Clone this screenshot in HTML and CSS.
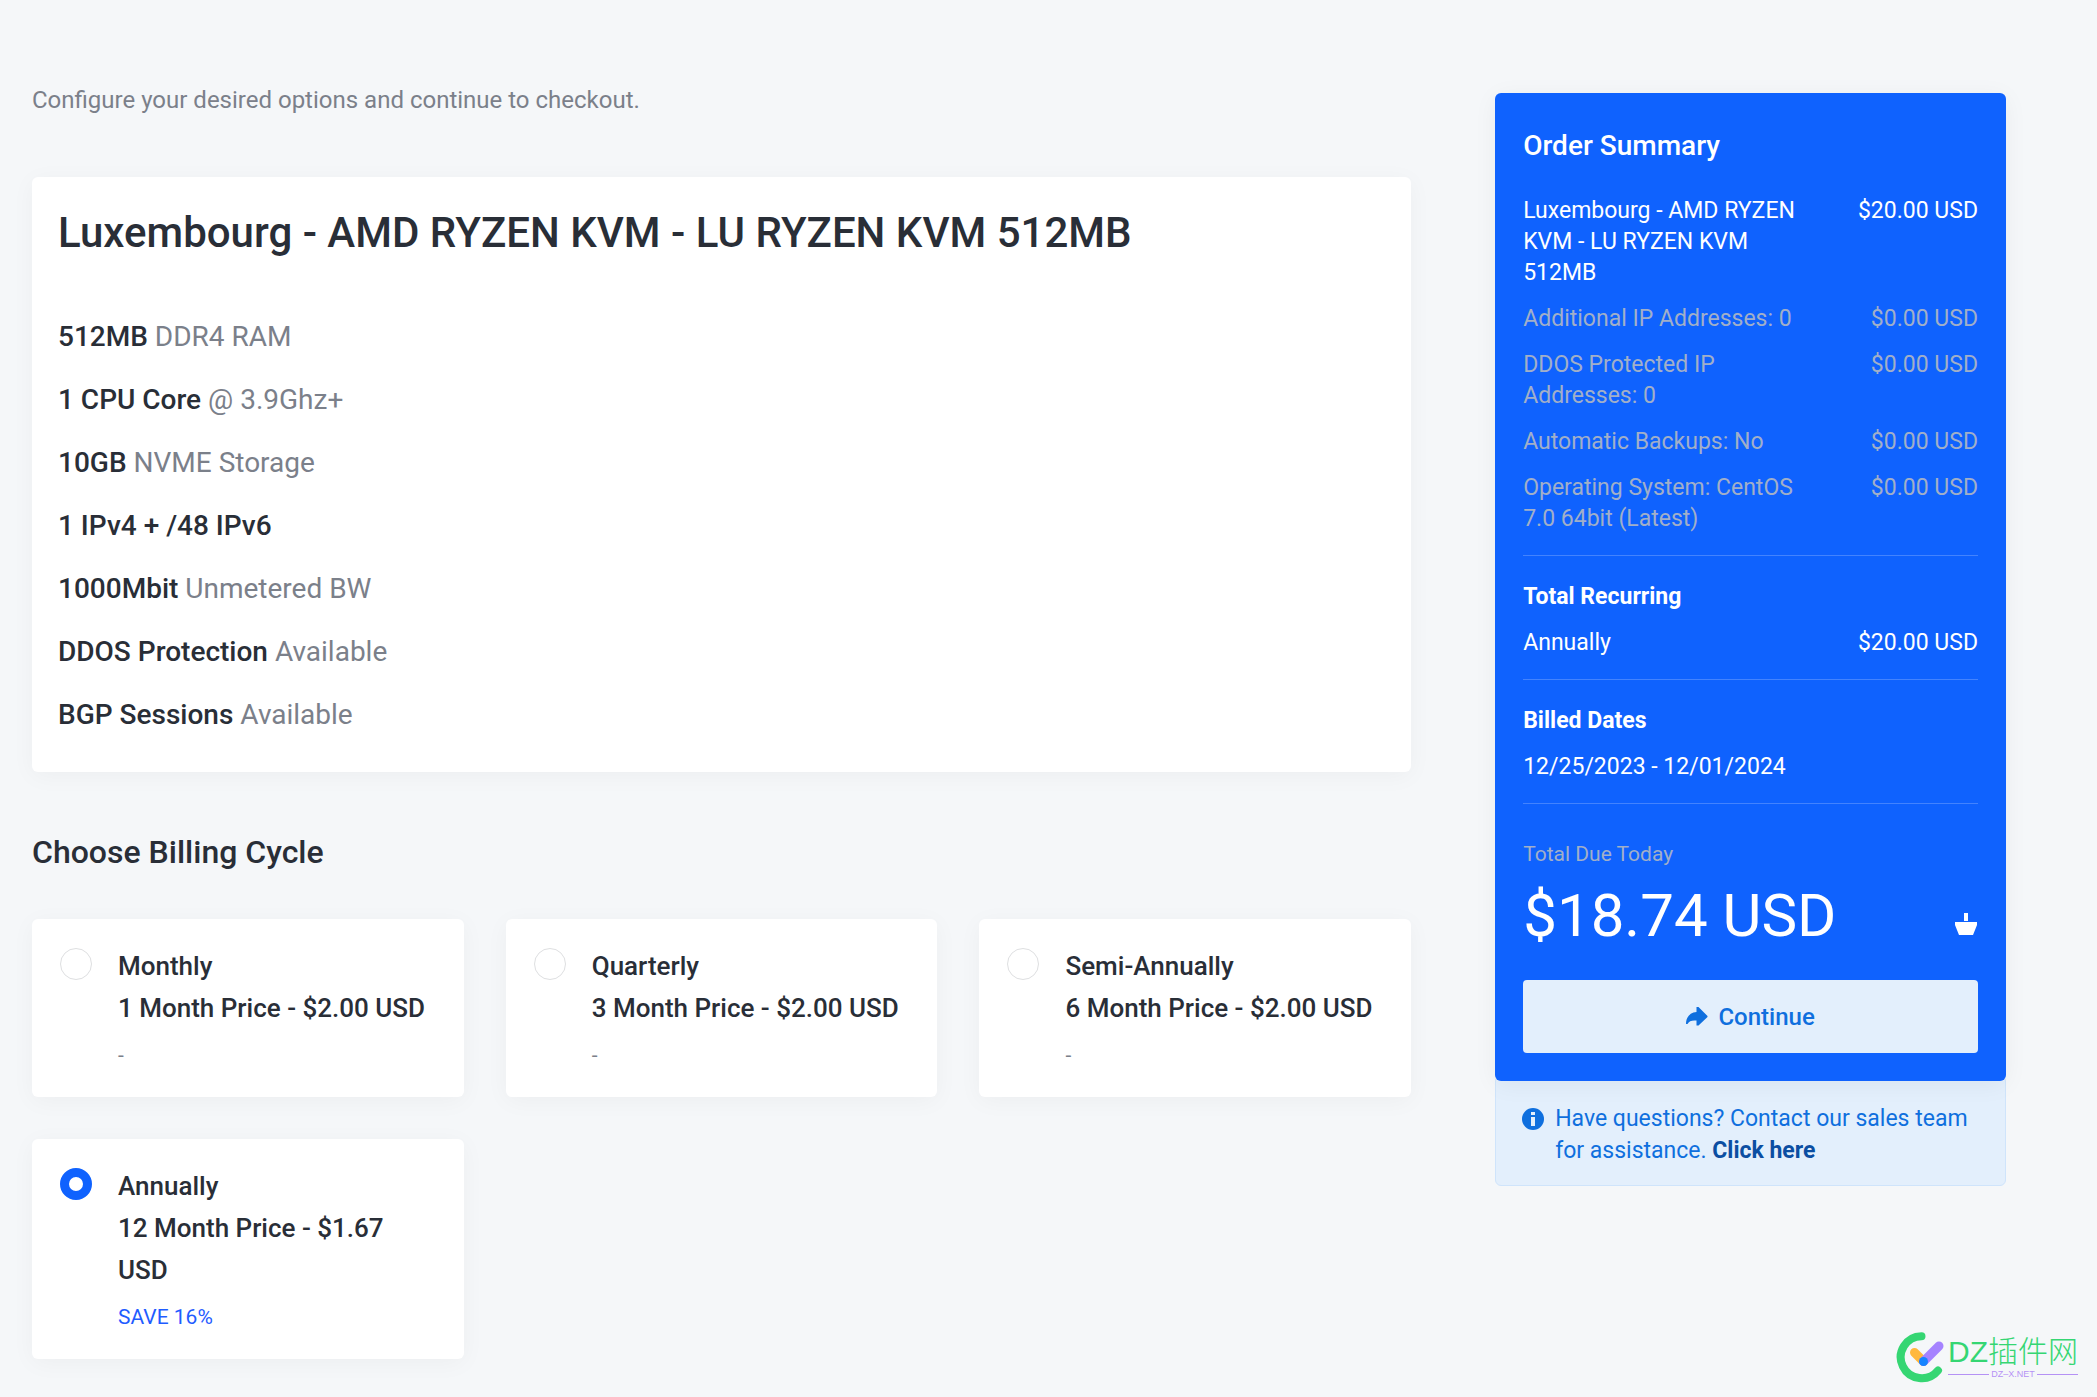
FILE: index.html
```html
<!DOCTYPE html>
<html lang="en">
<head>
<meta charset="utf-8">
<meta name="viewport" content="width=device-width, initial-scale=1">
<title>Configure - LU RYZEN KVM 512MB</title>
<link rel="stylesheet" href="styles.css">
</head>
<body>
<form class="page">
  <main class="config">
    <p class="intro">Configure your desired options and continue to checkout.</p>

    <section class="panel product">
      <h1 class="product-title">Luxembourg - AMD RYZEN KVM - LU RYZEN KVM 512MB</h1>
      <ul class="specs">
        <li><strong>512MB</strong> DDR4 RAM</li>
        <li><strong>1 CPU Core</strong> @ 3.9Ghz+</li>
        <li><strong>10GB</strong> NVME Storage</li>
        <li><strong>1 IPv4 + /48 IPv6</strong></li>
        <li><strong>1000Mbit</strong> Unmetered BW</li>
        <li><strong>DDOS Protection</strong> Available</li>
        <li><strong>BGP Sessions</strong> Available</li>
      </ul>
    </section>

    <h2 class="section-title" id="cycle-title">Choose Billing Cycle</h2>
    <div class="cycles" role="radiogroup" aria-labelledby="cycle-title">
      <label class="panel cycle" for="cycle-monthly">
        <input class="radio" type="radio" name="cycle" id="cycle-monthly">
        <span class="cycle-body">
          <span class="cycle-name">Monthly</span>
          <span class="cycle-price">1 Month Price - $2.00 USD</span>
          <span class="cycle-note">-</span>
        </span>
      </label>
      <label class="panel cycle" for="cycle-quarterly">
        <input class="radio" type="radio" name="cycle" id="cycle-quarterly">
        <span class="cycle-body">
          <span class="cycle-name">Quarterly</span>
          <span class="cycle-price">3 Month Price - $2.00 USD</span>
          <span class="cycle-note">-</span>
        </span>
      </label>
      <label class="panel cycle" for="cycle-semi">
        <input class="radio" type="radio" name="cycle" id="cycle-semi">
        <span class="cycle-body">
          <span class="cycle-name">Semi-Annually</span>
          <span class="cycle-price">6 Month Price - $2.00 USD</span>
          <span class="cycle-note">-</span>
        </span>
      </label>
      <label class="panel cycle" for="cycle-annual">
        <input class="radio" type="radio" name="cycle" id="cycle-annual" checked>
        <span class="cycle-body">
          <span class="cycle-name">Annually</span>
          <span class="cycle-price">12 Month Price - $1.67 USD</span>
          <span class="cycle-note cycle-save">SAVE 16%</span>
        </span>
      </label>
    </div>
  </main>

  <aside class="sidebar">
    <section class="summary">
      <h2 class="summary-title">Order Summary</h2>
      <ul class="lines">
        <li class="line"><span class="line-name">Luxembourg - AMD RYZEN KVM - LU RYZEN KVM 512MB</span><span>$20.00 USD</span></li>
        <li class="line muted"><span class="line-name">Additional IP Addresses: 0</span><span>$0.00 USD</span></li>
        <li class="line muted"><span class="line-name">DDOS Protected IP Addresses: 0</span><span>$0.00 USD</span></li>
        <li class="line muted"><span class="line-name">Automatic Backups: No</span><span>$0.00 USD</span></li>
        <li class="line muted"><span class="line-name">Operating System: CentOS 7.0 64bit (Latest)</span><span>$0.00 USD</span></li>
      </ul>
      <div class="lines group">
        <h3 class="group-title">Total Recurring</h3>
        <div class="line"><span>Annually</span><span>$20.00 USD</span></div>
      </div>
      <div class="lines group">
        <h3 class="group-title">Billed Dates</h3>
        <div class="line"><span>12/25/2023 - 12/01/2024</span></div>
      </div>
      <div class="due">
        <p class="due-label muted">Total Due Today</p>
        <div class="due-row">
          <span class="due-amount">$18.74 USD</span>
          <svg class="basket" viewBox="0 0 24 24" aria-hidden="true"><path d="M10 1h4v8h-4zM1 10h22v3l-4 10H5L1 13z" fill="currentColor"/></svg>
        </div>
      </div>
      <button class="continue" type="submit">
        <svg class="arrow" viewBox="0 0 22 19" aria-hidden="true"><path d="M10.500 0H12.500L21.500 9v1L12.500 18.500H10.500V13.500C6 13 3 14 1.500 17H0C0 10 4 5.500 10.500 5z" fill="currentColor"/></svg>
        <span>Continue</span>
      </button>
    </section>
    <div class="help">
      <svg class="info" viewBox="0 0 22 22" aria-hidden="true"><circle cx="11" cy="11" r="11" fill="currentColor"/><path d="M9 4h4v3H9zM9 9h4v9H9z" fill="#e3effc"/></svg>
      <p class="help-text">Have questions? Contact our sales team for assistance. <a class="help-link" href="#contact">Click here</a></p>
    </div>
  </aside>
</form>

<div class="watermark">
  <svg class="watermark-logo" viewBox="0 0 48 52" aria-hidden="true">
    <g fill="none" stroke-linecap="round">
      <path d="M25.500 5.200A21 21 0 1 0 42 39.500" stroke="#35d673" stroke-width="8"/>
      <path d="M18.500 21.500l9 9" stroke="#ffb83d" stroke-width="9"/>
      <path d="M27.500 30.500L43 15" stroke="#a583ff" stroke-width="9"/>
    </g>
    <circle cx="27.500" cy="30.500" r="4.500" fill="#1684ff"/>
  </svg>
  <div class="watermark-text">
    <span class="watermark-name">DZ插件网</span>
    <span class="watermark-site">DZ–X.NET</span>
  </div>
</div>
</body>
</html>
```
FILE: styles.css
```css
* { box-sizing: border-box; }

body {
  margin: 0;
  background: #f5f7f9;
  color: #292e37;
  font-family: Roboto, "Liberation Sans", sans-serif;
  font-size: 24px;
}

h1, h2, h3, p, ul { margin: 0; padding: 0; }
h1, h2, strong { font-weight: 500; }
ul { list-style: none; }

.page {
  display: grid;
  grid-template-columns: minmax(0, 27fr) minmax(0, 10fr);
  gap: 84px;
  align-items: start;
  padding: 80px 91px 37px 32px;
}

.panel {
  background: #fff;
  border-radius: 6px;
  box-shadow: 0 4px 24px rgba(0, 0, 0, 0.04);
}

.intro {
  color: #7b808a;
  line-height: 40px;
  margin-bottom: 57px;
}

.product { padding: 26px; }

.product-title {
  font-size: 42px;
  line-height: 60px;
  margin-bottom: 42px;
}

.specs {
  color: #7b808a;
  font-size: 28px;
  line-height: 63px;
}

.specs strong { color: #292e37; }

.section-title {
  font-size: 32px;
  line-height: 42px;
  margin: 59px 0 46px;
}

.cycles {
  display: grid;
  grid-template-columns: repeat(3, minmax(0, 1fr));
  gap: 42px;
}

.cycle {
  display: flex;
  gap: 26px;
  padding: 26px 28px;
  cursor: pointer;
}

.radio {
  appearance: none;
  flex: none;
  width: 32px;
  height: 32px;
  margin: 3px 0 0;
  border: 1px solid #dedfe1;
  border-radius: 50%;
  background: #fff;
}

.radio:checked { border: 9px solid #0f62fe; }

.cycle-body {
  display: flex;
  flex-direction: column;
  font-size: 26px;
  font-weight: 500;
  line-height: 42px;
}

.cycle-note {
  margin-top: 11px;
  color: #7b808a;
  font-size: 21px;
  font-weight: 400;
  line-height: 31px;
}

.cycle-save { color: #1f5cff; }

.sidebar { margin-top: 13px; }

.summary {
  position: relative;
  padding: 28px;
  border-radius: 6px;
  background: #0f62fe;
  color: #fff;
  box-shadow: 0 4px 24px rgba(0, 0, 0, 0.05);
}

.summary-title {
  font-size: 28px;
  line-height: 50px;
  margin-bottom: 24px;
}

.lines {
  display: flex;
  flex-direction: column;
  gap: 15px;
  padding-bottom: 21px;
  border-bottom: 1px solid #4383fe;
  font-size: 23px;
  line-height: 31px;
}

.line {
  display: flex;
  justify-content: space-between;
}

.line-name { max-width: 60%; }
.muted { color: #a1afc8; }
.group { padding-top: 25px; }

.group-title {
  font-size: 23px;
  font-weight: 700;
}

.due { padding: 35px 0 19px; }

.due-label {
  font-size: 21px;
  line-height: 31px;
}

.due-row {
  display: flex;
  justify-content: space-between;
  align-items: baseline;
}

.due-amount {
  font-size: 60px;
  line-height: 91px;
}

.basket {
  width: 24px;
  height: 24px;
}

.continue {
  display: flex;
  align-items: center;
  justify-content: center;
  gap: 10px;
  width: 100%;
  height: 73px;
  border: 0;
  border-radius: 4px;
  background: #e3effc;
  color: #0f6fde;
  font: 500 24px Roboto, "Liberation Sans", sans-serif;
  cursor: pointer;
}

.arrow {
  width: 22px;
  height: 19px;
}

.help {
  display: flex;
  gap: 11px;
  margin-top: -6px;
  padding: 27px 28px 18px 26px;
  border: 1px solid #cfe4fb;
  border-radius: 6px;
  background: #e3effc;
  color: #0f6fde;
  font-size: 23px;
  line-height: 32px;
}

.info {
  flex: none;
  width: 22px;
  height: 22px;
  margin-top: 5px;
}

.help-link {
  color: #0b4ea2;
  font-weight: 700;
  text-decoration: none;
}

.watermark {
  position: absolute;
  right: 19px;
  bottom: 14px;
  display: flex;
  gap: 4px;
  pointer-events: none;
}

.watermark-logo {
  width: 48px;
  height: 52px;
}

.watermark-text {
  display: flex;
  flex-direction: column;
  padding-top: 4px;
}

.watermark-name {
  color: #35d673;
  font: 300 30px/34px "Liberation Sans", "Noto Sans CJK SC", sans-serif;
}

.watermark-site {
  display: flex;
  align-items: center;
  gap: 2px;
  color: #b592f5;
  font: 9px/10px "Liberation Sans", sans-serif;
}

.watermark-site::before,
.watermark-site::after {
  content: "";
  flex: 1;
  height: 1px;
  background: #b592f5;
}
```
